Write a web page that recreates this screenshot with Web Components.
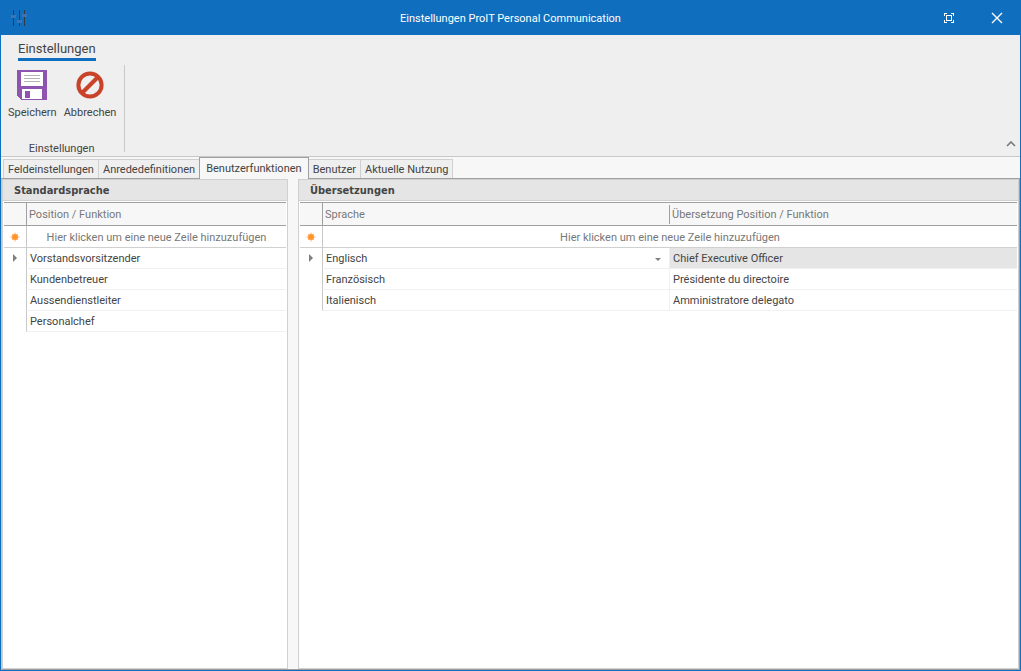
<!DOCTYPE html>
<html lang="de">
<head>
<meta charset="utf-8">
<title>Einstellungen ProIT Personal Communication</title>
<style>
html, body { height: 100%; margin: 0; }
body { font: 11px/16px Roboto, "Noto Sans", sans-serif; color: #444; }
</style>
</head>
<body>
<app-window>
  <title-bar slot="title">Einstellungen ProIT Personal Communication</title-bar>
  <ribbon-bar slot="ribbon" tab="Einstellungen" group="Einstellungen">
    <ribbon-button label="Speichern">
      <svg width="30" height="30" viewBox="0 0 30 30" aria-hidden="true" shape-rendering="crispEdges">
        <path fill="#8e54b0" d="M0 0h30v30H4L0 26z"/>
        <path fill="#fff" d="M4 2h22v13q0 1-1 1H5q-1 0-1-1zM5 19h20v10H5z"/>
        <path fill="#b4b4b4" d="M7 5h16v1H7zM7 8h16v1H7zM7 11h16v1H7z"/>
        <path fill="#8e54b0" d="M8 21h5v7H8z"/>
      </svg>
    </ribbon-button>
    <ribbon-button label="Abbrechen">
      <svg width="30" height="30" viewBox="0 0 30 30" aria-hidden="true">
        <circle cx="15" cy="15" r="11.6" fill="none" stroke="#c8432a" stroke-width="4"/>
        <path d="M23 7 7 23" stroke="#c8432a" stroke-width="4"/>
      </svg>
    </ribbon-button>
  </ribbon-bar>
  <tab-strip slot="tabs" active="2" labels="Feldeinstellungen|Anrededefinitionen|Benutzerfunktionen|Benutzer|Aktuelle Nutzung"></tab-strip>
  <grid-panel heading="Standardsprache" columns="Position / Funktion" rows="Vorstandsvorsitzender;Kundenbetreuer;Aussendienstleiter;Personalchef"></grid-panel>
  <grid-panel class="wide" heading="Übersetzungen" editable columns="Sprache|Übersetzung Position / Funktion" rows="Englisch|Chief Executive Officer;Französisch|Présidente du directoire;Italienisch|Amministratore delegato"></grid-panel>
</app-window>
<script>
class ShadowElement extends HTMLElement {
  render(css, html) {
    const root = this.attachShadow({ mode: "open" });
    const template = document.createElement("template");
    template.innerHTML = `<style>*{box-sizing:border-box}button,select{font:inherit;color:inherit;border:0;margin:0;padding:0;background:none}${css}</style>${html}`;
    root.append(template.content.cloneNode(true));
  }
}

customElements.define("app-window", class extends ShadowElement {
  connectedCallback() {
    this.render(`
      :host { display: flex; flex-direction: column; box-sizing: border-box; min-height: 100vh; border: solid #106ebe; border-width: 0 1px 1px; background: #f7f7f7; }
      main { flex: 1; display: flex; gap: 10px; border: 1px solid #a0a0a0; border-top: 0; border-left-color: #c6c6c6; }
      ::slotted(grid-panel) { flex: 0 0 286px; }
      ::slotted(.wide) { flex: 1 1 0; min-width: 0; }`,
      `<slot name="title"></slot><slot name="ribbon"></slot><slot name="tabs"></slot><main><slot></slot></main>`);
  }
});

customElements.define("title-bar", class extends ShadowElement {
  connectedCallback() {
    this.render(`
      :host { display: block; background: #106ebe; color: #fff; }
      header { display: grid; grid-template-columns: 1fr auto 1fr; align-items: center; height: 35px; margin: 0 -1px; padding: 0 10px; }
      h1 { margin: 0; padding-top: 2px; font: inherit; }
      .tools { display: flex; justify-content: flex-end; gap: 20px; }
      button { display: grid; place-items: center; width: 28px; height: 28px; }
      svg { display: block; }`,
      `<header>
        <svg width="18" height="18" viewBox="0 0 18 18" shape-rendering="crispEdges" aria-hidden="true">
          <path fill="#2d3a48" d="M3 1h1v16H3zM9 1h1v16H9zM14 1h1v16h-1z"/>
          <path fill="#3f73b5" d="M1 6h5v3H1zM7 11h5v3H7zM12 5h5v3h-5z"/>
        </svg>
        <h1><slot></slot></h1>
        <div class="tools">
          <button aria-label="Vollbild"><svg width="10" height="10" viewBox="0 0 10 10" fill="none" stroke="#fff" shape-rendering="crispEdges"><path d="M.5 3V.5H3M7 .5h2.500V3M9.500 7v2.500H7M3 9.500H.5V7M2.500 2.500h5v5h-5z"/></svg></button>
          <button aria-label="Schliessen"><svg width="12" height="12" viewBox="0 0 12 12" fill="none" stroke="#fff" stroke-width="1.400"><path d="m1 1 10 10M11 1 1 11"/></svg></button>
        </div>
      </header>`);
  }
});

customElements.define("ribbon-bar", class extends ShadowElement {
  connectedCallback() {
    this.render(`
      :host { display: block; background: #efefef; border-bottom: 1px solid #c8c8c8; }
      nav { display: flex; height: 27px; padding: 5px 0 0 17px; }
      a { height: 21px; border-bottom: 3px solid #106ebe; font-size: 13px; line-height: 18px; color: inherit; text-decoration: none; }
      .body { display: flex; justify-content: space-between; align-items: flex-end; height: 94px; padding: 3px 4px 4px 3px; }
      section { display: flex; flex-direction: column; justify-content: space-between; height: 87px; padding-right: 5px; border-right: 1px solid #c8c8c8; }
      .tools { display: flex; }
      h2 { margin: 0 0 -5px; font: inherit; text-align: center; }
      button { display: grid; place-items: center; width: 10px; height: 16px; }`,
      `<nav><a href="#"></a></nav>
       <div class="body"><section><div class="tools"><slot></slot></div><h2></h2></section>
       <button aria-label="Menüband minimieren"><svg width="10" height="6" viewBox="0 0 10 6" fill="none" stroke="#777" stroke-width="1.600"><path d="m1 5 4-4 4 4"/></svg></button></div>`);
    this.shadowRoot.querySelector("a").textContent = this.getAttribute("tab");
    this.shadowRoot.querySelector("h2").textContent = this.getAttribute("group");
  }
});

customElements.define("ribbon-button", class extends ShadowElement {
  connectedCallback() {
    this.render(`
      :host { display: block; }
      button { display: flex; flex-direction: column; align-items: center; gap: 5px; padding: 5px 3px 0 4px; }
      ::slotted(svg) { display: block; }`,
      `<button><slot></slot><span></span></button>`);
    this.shadowRoot.querySelector("span").textContent = this.getAttribute("label");
  }
});

customElements.define("tab-strip", class extends ShadowElement {
  connectedCallback() {
    const active = Number(this.getAttribute("active"));
    const tabs = this.getAttribute("labels").split("|").map((label, i) =>
      `<button role="tab" aria-selected="${i === active}">${label}</button>`).join("");
    this.render(`
      :host { display: block; }
      div { display: flex; align-items: flex-end; height: 22px; padding-left: 2px; border-bottom: 1px solid #a0a0a0; }
      button { height: 19px; padding: 1px 4px 0; border: 1px solid #d0d0d0; border-bottom: 0; background: #efefef; }
      button + button { margin-left: -1px; }
      [aria-selected=true] { height: 22px; margin-bottom: -1px; padding: 0 6px; border-color: #a0a0a0; background: #f7f7f7; }
      [aria-selected=true] + button { margin-left: 0; border-left: 0; }`,
      `<div role="tablist">${tabs}</div>`);
  }
});

customElements.define("grid-panel", class extends ShadowElement {
  connectedCallback() {
    const columns = this.getAttribute("columns").split("|");
    const editable = this.hasAttribute("editable");
    const arrow = `<svg width="4" height="8" viewBox="0 0 4 8" aria-hidden="true"><path fill="#808080" d="m0 0 4 4-4 4z"/></svg>`;
    const star = `<svg width="10" height="10" viewBox="0 0 10 10" aria-hidden="true"><circle cx="5" cy="5" r="3" fill="#ff9328"/><path stroke="#ffb066" d="M5 .5v9M.5 5h9M2 2l6 6M8 2 2 8"/><circle cx="5" cy="5" r="2.500" fill="#ff9328"/></svg>`;
    const rows = this.getAttribute("rows").split(";").map((row, i) => {
      const cells = row.split("|").map((text, c) => {
        const select = editable && i === 0 && c === 0;
        const value = select
          ? `<div class="pick"><select aria-label="${columns[c]}"><option>${text}</option></select><svg width="6" height="3" viewBox="0 0 6 3" aria-hidden="true"><path fill="#808080" d="M0 0h6L3 3z"/></svg></div>`
          : text;
        return `<td class="${i === 0 && c === 1 ? "focus" : ""}">${value}</td>`;
      }).join("");
      return `<tr><td class="mark">${i === 0 ? arrow : ""}</td>${cells}</tr>`;
    }).join("");
    this.render(`
      :host { display: flex; flex-direction: column; box-sizing: border-box; border: 1px solid #d0d0d0; background: #fff; }
      h2 { margin: 0 0 1px; height: 21px; padding: 3px 11px 0; font: inherit; font-family: "DejaVu Sans Condensed", sans-serif; font-weight: bold; background: #e5e5e5; border-bottom: 1px solid #d0d0d0; }
      .grid { padding: 0 1px; }
      table { width: 100%; table-layout: fixed; border-collapse: separate; border-spacing: 0; border-top: 1px solid #a0a0a0; }
      th, td { height: 21px; padding: 2px 3px 0; border-bottom: 1px solid #f0f0f0; font-weight: normal; text-align: left; white-space: nowrap; overflow: hidden; line-height: 16px; }
      th { height: 23px; padding: 2px 2px 0; border-bottom-color: #a0a0a0; background: #f7f7f7; color: #777; }
      .mark { width: 23px; padding: 0; border-right: 1px solid #c8c8c8; border-bottom-color: #fff; text-align: center; }
      th.mark { border-color: #a0a0a0; }
      th:not(.mark, :last-child) { background: linear-gradient(#a0a0a0, #a0a0a0) 100% 50% / 1px 19px no-repeat #f7f7f7; }
      td:not(.mark, :last-child) { border-right: 1px solid #f0f0f0; }
      .new td { height: 22px; border-bottom-color: #d0d0d0; color: #777; }
      .new button { display: block; width: 100%; text-align: center; }
      .mark svg { display: block; margin: 0 auto; }
      .focus { background: #e5e5e5; }
      .pick { display: flex; align-items: center; padding-right: 5px; }
      select { flex: 1; appearance: none; height: 16px; outline: 0; }`,
      `<h2>${this.getAttribute("heading")}</h2>
       <div class="grid"><table>
         <thead><tr><th class="mark"></th>${columns.map(c => `<th scope="col">${c}</th>`).join("")}</tr></thead>
         <tbody><tr class="new"><td class="mark">${star}</td><td colspan="${columns.length}"><button>Hier klicken um eine neue Zeile hinzuzufügen</button></td></tr>${rows}</tbody>
       </table></div>`);
  }
});
</script>
</body>
</html>
